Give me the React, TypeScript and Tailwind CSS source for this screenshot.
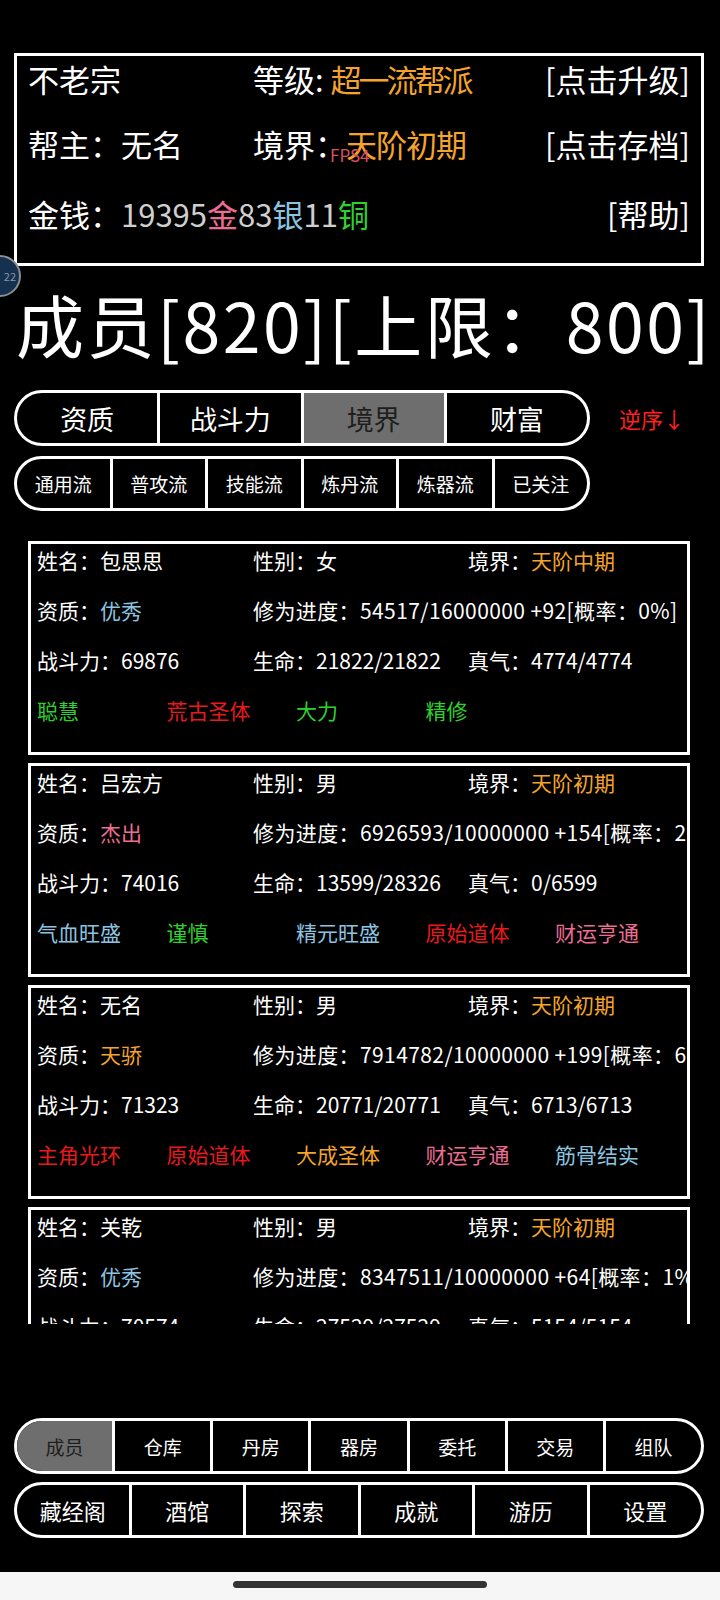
import React from "react";

const FONT = { fontFamily: '"Noto Sans CJK SC", "Noto Sans", sans-serif' };

type Trait = { text: string; color: string };

interface Member {
  name: string;
  gender: string;
  realm: string;
  talent: string;
  talentColor: string;
  progress: string;
  power: string;
  hp: string;
  qi: string;
  traits: Trait[];
}

const RED = "text-[#e8191c]";
const GREEN = "text-[#2ed12e]";
const BLUE = "text-[#8cc4e0]";
const PINK = "text-[#ec6d92]";
const ORANGE = "text-[#f4a42a]";

const members: Member[] = [
  {
    name: "包思思",
    gender: "女",
    realm: "天阶中期",
    talent: "优秀",
    talentColor: BLUE,
    progress: "54517/16000000 +92[概率：0%]",
    power: "69876",
    hp: "21822/21822",
    qi: "4774/4774",
    traits: [
      { text: "聪慧", color: GREEN },
      { text: "荒古圣体", color: RED },
      { text: "大力", color: GREEN },
      { text: "精修", color: GREEN },
    ],
  },
  {
    name: "吕宏方",
    gender: "男",
    realm: "天阶初期",
    talent: "杰出",
    talentColor: PINK,
    progress: "6926593/10000000 +154[概率：2%]",
    power: "74016",
    hp: "13599/28326",
    qi: "0/6599",
    traits: [
      { text: "气血旺盛", color: BLUE },
      { text: "谨慎", color: GREEN },
      { text: "精元旺盛", color: BLUE },
      { text: "原始道体", color: RED },
      { text: "财运亨通", color: PINK },
    ],
  },
  {
    name: "无名",
    gender: "男",
    realm: "天阶初期",
    talent: "天骄",
    talentColor: ORANGE,
    progress: "7914782/10000000 +199[概率：6%]",
    power: "71323",
    hp: "20771/20771",
    qi: "6713/6713",
    traits: [
      { text: "主角光环", color: RED },
      { text: "原始道体", color: RED },
      { text: "大成圣体", color: ORANGE },
      { text: "财运亨通", color: PINK },
      { text: "筋骨结实", color: BLUE },
    ],
  },
  {
    name: "关乾",
    gender: "男",
    realm: "天阶初期",
    talent: "优秀",
    talentColor: BLUE,
    progress: "8347511/10000000 +64[概率：1%]",
    power: "70574",
    hp: "27529/27529",
    qi: "5154/5154",
    traits: [],
  },
];

function MemberCard({ m }: { m: Member }) {
  return (
    <div className="w-[662px] h-[214px] shrink-0 border-[3px] border-white overflow-hidden flex flex-col gap-[18px] pl-[6px] text-[21px] leading-none text-white whitespace-nowrap">
      <div className="h-[32px] flex items-center">
        <span className="w-[216px] shrink-0">姓名：{m.name}</span>
        <span className="w-[215px] shrink-0">性别：{m.gender}</span>
        <span>
          境界：<span className={ORANGE}>{m.realm}</span>
        </span>
      </div>
      <div className="h-[32px] flex items-center">
        <span className="w-[216px] shrink-0">
          资质：<span className={m.talentColor}>{m.talent}</span>
        </span>
        <span className="tracking-[0.4px]">修为进度：{m.progress}</span>
      </div>
      <div className="h-[32px] flex items-center">
        <span className="w-[216px] shrink-0">战斗力：{m.power}</span>
        <span className="w-[215px] shrink-0">生命：{m.hp}</span>
        <span>真气：{m.qi}</span>
      </div>
      <div className="h-[32px] flex items-center">
        {m.traits.map((t, i) => (
          <span key={i} className={`w-[129.5px] shrink-0 ${t.color}`}>
            {t.text}
          </span>
        ))}
      </div>
    </div>
  );
}

function PillBar({
  items,
  active,
  className,
  textClass,
}: {
  items: string[];
  active?: number;
  className: string;
  textClass: string;
}) {
  return (
    <div className={`flex border-[3px] border-white rounded-full overflow-hidden ${className}`}>
      {items.map((label, i) => (
        <div
          key={label}
          className={`flex-1 flex items-center justify-center leading-none ${textClass} ${
            i > 0 ? "border-l-[3px] border-white" : ""
          } ${i === active ? "bg-[#6e6e6e] text-[#1e1e1e]" : "text-white"}`}
        >
          {label}
        </div>
      ))}
    </div>
  );
}

export default function App() {
  return (
    <div className="relative w-[720px] h-[1600px] bg-black overflow-hidden flex flex-col" style={FONT}>
      {/* header box */}
      <div className="mt-[53px] ml-[14px] w-[690px] h-[213px] border-[3px] border-white flex flex-col pl-[11px] pr-[11px] text-[31px] leading-none text-white whitespace-nowrap">
        <div className="h-[44px] flex items-center">
          <span className="w-[225px] shrink-0">不老宗</span>
          <span className="flex-1">
            等级: <span className={`${ORANGE} tracking-[-3px]`}>超一流帮派</span>
          </span>
          <span>[点击升级]</span>
        </div>
        <div className="mt-[21px] h-[44px] flex items-center">
          <span className="w-[225px] shrink-0">帮主：无名</span>
          <span className="flex-1">
            境界：<span className={`${ORANGE} tracking-[-1px]`}>天阶初期</span>
          </span>
          <span>[点击存档]</span>
        </div>
        <div className="mt-[26px] h-[44px] flex items-center">
          <span className="flex-1">
            金钱：<span className="text-[#cfcfcf]">19395</span>
            <span className={PINK}>金</span>
            <span className="text-[#cfcfcf]">83</span>
            <span className={BLUE}>银</span>
            <span className="text-[#cfcfcf]">11</span>
            <span className={GREEN}>铜</span>
          </span>
          <span>[帮助]</span>
        </div>
      </div>

      {/* fps overlay */}
      <div className="absolute left-[330px] top-[146px] text-[17px] leading-none text-[#d9525e]">FPS4</div>

      {/* floating ball */}
      <div className="absolute left-[-21px] top-[255px] w-[42px] h-[42px] rounded-full bg-[#16304f] border-2 border-[#8a8f96] flex items-center justify-end pr-[3px] text-[11px] text-[#8a97a8]">
        22
      </div>

      {/* title */}
      <div className="mt-[20px] ml-[16px] h-[76px] flex items-center text-[68px] leading-none tracking-[2.5px] text-white whitespace-nowrap">
        成员[820][上限：800]
      </div>

      {/* sort bar */}
      <div className="mt-[28px] flex items-center">
        <PillBar
          items={["资质", "战斗力", "境界", "财富"]}
          active={2}
          className="ml-[14px] w-[576px] h-[56px]"
          textClass="text-[27px]"
        />
        <div className="ml-[29px] text-[22px] leading-none text-[#ff1f1f]">逆序↓</div>
      </div>

      {/* filter bar */}
      <PillBar
        items={["通用流", "普攻流", "技能流", "炼丹流", "炼器流", "已关注"]}
        className="mt-[10px] ml-[14px] w-[576px] h-[55px]"
        textClass="text-[19px]"
      />

      {/* member list */}
      <div className="mt-[30px] ml-[28px] h-[783px] overflow-hidden flex flex-col gap-[8px]">
        {members.map((m) => (
          <MemberCard key={m.name} m={m} />
        ))}
      </div>

      {/* bottom nav */}
      <PillBar
        items={["成员", "仓库", "丹房", "器房", "委托", "交易", "组队"]}
        active={0}
        className="mt-[94px] ml-[14px] w-[690px] h-[56px]"
        textClass="text-[19px]"
      />
      <PillBar
        items={["藏经阁", "酒馆", "探索", "成就", "游历", "设置"]}
        className="mt-[8px] ml-[14px] w-[690px] h-[56px]"
        textClass="text-[22px]"
      />

      {/* system bar */}
      <div className="mt-auto h-[28px] bg-[#f6f6f6] flex justify-center pt-[9px]">
        <div className="w-[254px] h-[7px] rounded-full bg-[#333333]" />
      </div>
    </div>
  );
}
